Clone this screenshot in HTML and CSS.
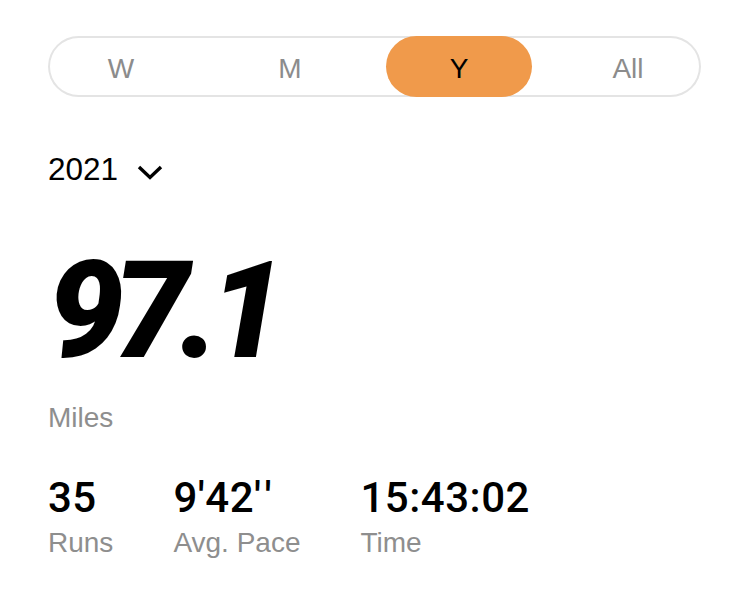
FILE: index.html
```html
<!DOCTYPE html>
<html lang="en">
  <head>
    <meta charset="UTF-8" />
    <meta name="viewport" content="width=device-width, initial-scale=1.0" />
    <title>Run Stats</title>
    <link rel="stylesheet" href="styles.css">
  </head>
  <body>
    <div class="container">
      <div class="segmented">
        <button class="segment">W</button>
        <button class="segment">M</button>
        <button class="segment active">Y</button>
        <button class="segment">All</button>
      </div>

      <div class="year-picker">
        <span>2021</span>
        <svg class="chevron" width="26" height="16" viewBox="0 0 26 16">
          <path d="M2 3 L13 13.5 L24 3" fill="none" stroke="#000" stroke-width="3.4" />
        </svg>
      </div>

      <div class="distance">97.1</div>
      <div class="unit">Miles</div>

      <div class="stats">
        <div class="stat">
          <div class="stat-value">35</div>
          <div class="stat-label">Runs</div>
        </div>
        <div class="stat">
          <div class="stat-value">9'42<span class="prime">'</span>'</div>
          <div class="stat-label">Avg. Pace</div>
        </div>
        <div class="stat">
          <div class="stat-value">15:43:02</div>
          <div class="stat-label">Time</div>
        </div>
      </div>
    </div>
  </body>
</html>
```

FILE: styles.css
```css
body {
  font-family: "Liberation Sans", Arial, sans-serif;
  background: #fff;
  color: #000;
  margin: 0;
}

.container {
  padding: 36px 48px;
}

.segmented {
  display: grid;
  grid-template-columns: repeat(4, 146px);
  column-gap: 23px;
  height: 61px;
  border-radius: 31px;
  box-shadow: inset 0 0 0 2px #e4e4e4;
  width: 653px;
}

.segment {
  font-family: "Liberation Sans", Arial, sans-serif;
  font-size: 28px;
  line-height: 65px;
  height: 61px;
  padding: 0;
  border: none;
  background: transparent;
  color: #8c8c8c;
  border-radius: 31px;
  cursor: pointer;
}

.segment.active {
  background: #f09a4b;
  color: #000;
}

.year-picker {
  display: flex;
  align-items: center;
  gap: 19px;
  margin-top: 54px;
  font-size: 31.5px;
  line-height: 36px;
}

.chevron {
  margin-top: 5px;
}

.distance {
  margin-top: 57px;
  font-family: Roboto, sans-serif;
  font-weight: 900;
  font-style: italic;
  font-size: 135px;
  line-height: 135px;
  letter-spacing: -10px;
}

.unit {
  margin-top: 23px;
  font-size: 28px;
  line-height: 32px;
  color: #8e8e8e;
}

.stats {
  display: flex;
  gap: 60px;
  margin-top: 40px;
}

.stat-value {
  font-family: Roboto, sans-serif;
  font-weight: 500;
  font-size: 42px;
  line-height: 48px;
  letter-spacing: 0.5px;
}

.prime {
  margin-right: 3px;
}

.stat-label {
  margin-top: 5px;
  font-size: 28px;
  line-height: 32px;
  color: #8e8e8e;
}
```
